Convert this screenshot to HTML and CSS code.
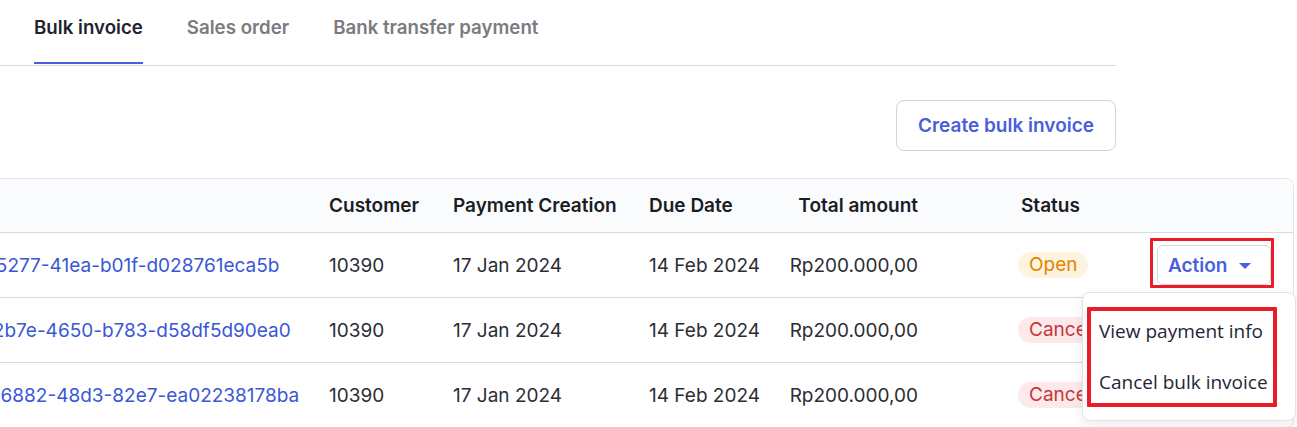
FILE: index.html
```html
<!DOCTYPE html>
<html>
<head>
<meta charset="utf-8">
<link rel="stylesheet" href="styles.css">
</head>
<body>
<div class="page">
  <nav class="tabs">
    <a class="tab active">Bulk invoice</a>
    <a class="tab">Sales order</a>
    <a class="tab">Bank transfer payment</a>
  </nav>
  <div class="toolbar">
    <button class="btn-create">Create bulk invoice</button>
  </div>
  <div class="table-card">
    <table class="grid">
      <colgroup>
        <col class="c-id"><col class="c-cust"><col class="c-pay"><col class="c-due"><col class="c-total"><col class="c-status"><col class="c-action">
      </colgroup>
      <thead>
        <tr>
          <th>ID</th>
          <th>Customer</th>
          <th>Payment Creation</th>
          <th>Due Date</th>
          <th class="right">Total amount</th>
          <th class="status-h">Status</th>
          <th></th>
        </tr>
      </thead>
      <tbody>
        <tr>
          <td><a class="link">9c1e4a3d-5277-41ea-b01f-d028761eca5b</a></td>
          <td>10390</td>
          <td>17 Jan 2024</td>
          <td>14 Feb 2024</td>
          <td class="right">Rp200.000,00</td>
          <td class="status"><span class="badge open">Open</span></td>
          <td class="action-cell"><button class="btn-action">Action <span class="caret"></span></button></td>
        </tr>
        <tr>
          <td><a class="link">4f0a6b21-2b7e-4650-b783-d58df5d90ea0</a></td>
          <td>10390</td>
          <td>17 Jan 2024</td>
          <td>14 Feb 2024</td>
          <td class="right">Rp200.000,00</td>
          <td class="status"><span class="badge cancel">Cancelled</span></td>
          <td class="action-cell"><button class="btn-action">Action <span class="caret"></span></button></td>
        </tr>
        <tr>
          <td><a class="link">e73b0d95-6882-48d3-82e7-ea02238178ba</a></td>
          <td>10390</td>
          <td>17 Jan 2024</td>
          <td>14 Feb 2024</td>
          <td class="right">Rp200.000,00</td>
          <td class="status"><span class="badge cancel">Cancelled</span></td>
          <td class="action-cell"><button class="btn-action">Action <span class="caret"></span></button></td>
        </tr>
      </tbody>
    </table>
  </div>
</div>

<div class="menu">
  <div class="menu-item">View payment info</div>
  <div class="menu-item">Cancel bulk invoice</div>
</div>

<div class="mark mark-action"></div>
<div class="mark mark-menu"></div>
</body>
</html>
```

FILE: styles.css
```css
html, body {
  margin: 0;
  padding: 0;
  background: #ffffff;
  overflow: hidden;
}
body {
  width: 1297px;
  height: 427px;
  position: relative;
  font-family: Inter, "Liberation Sans", sans-serif;
  color: #1d2029;
}
.page {
  width: 1116px;
}
.tabs {
  display: flex;
  gap: 44px;
  padding-left: 34px;
  height: 65px;
  border-bottom: 1px solid #d9dbe1;
  box-sizing: content-box;
}
.tab {
  font-size: 18.7px;
  font-weight: 600;
  line-height: 22px;
  padding-top: 17px;
  height: 45px;
  color: #7b7b7f;
}
.tab.active {
  color: #1f2330;
  border-bottom: 2px solid #4a5fd9;
}
.toolbar {
  display: flex;
  justify-content: flex-end;
  padding-top: 34px;
  padding-bottom: 27px;
}
.btn-create {
  width: 220px;
  height: 51px;
  border: 1px solid #cfd3dd;
  border-radius: 8px;
  background: #fff;
  color: #4a5fd9;
  font-family: Inter, "Liberation Sans", sans-serif;
  font-size: 19px;
  font-weight: 600;
  cursor: pointer;
}
.table-card {
  margin-left: -117px;
  width: 1411px;
  box-sizing: border-box;
  border: 1px solid #e1e4ea;
  border-radius: 8px;
  overflow: hidden;
}
.grid {
  width: 100%;
  table-layout: fixed;
  border-collapse: collapse;
  font-size: 19px;
}
.c-id { width: 429px; }
.c-cust { width: 124px; }
.c-pay { width: 196px; }
.c-due { width: 144px; }
.c-total { width: 183px; }
.c-status { width: 184px; }
.c-action { width: 149px; }
.grid th {
  height: 53px;
  background: #fafbfd;
  font-weight: 600;
  text-align: left;
  padding: 0 0 0 16px;
  color: #1a1d24;
  border-bottom: 1px solid #d6dae2;
  white-space: nowrap;
}
.grid td {
  height: 64px;
  padding: 0 0 0 16px;
  border-bottom: 1px solid #d6dae2;
  color: #2a2d34;
  white-space: nowrap;
  overflow: hidden;
}
.grid tbody tr:last-child td { border-bottom: none; }
.grid .right { text-align: right; padding-right: 42px; padding-left: 0; }
.grid .status { padding-left: 58px; }
.grid .status-h { padding-left: 61px; }
.link {
  color: #3a57d4;
  text-decoration: none;
}
.badge {
  display: inline-block;
  padding: 0 11px;
  height: 26px;
  line-height: 26px;
  border-radius: 13px;
  font-size: 19px;
}
.badge.open {
  background: #fdf3de;
  color: #e08600;
}
.badge.cancel {
  background: #fde8ea;
  color: #c23a3a;
}
.grid .action-cell { padding-left: 13px; }
.btn-action {
  display: inline-flex;
  align-items: center;
  gap: 12px;
  height: 40px;
  width: 114px;
  padding: 0 0 0 10px;
  border: 1px solid #d3d7df;
  border-radius: 6px;
  background: #fff;
  color: #4a5fd9;
  font-family: Inter, "Liberation Sans", sans-serif;
  font-size: 19px;
  font-weight: 600;
}
.caret {
  width: 0;
  height: 0;
  border-left: 6px solid transparent;
  border-right: 6px solid transparent;
  border-top: 6px solid #4a5fd9;
  margin-top: 2px;
}
.menu {
  position: absolute;
  left: 1082px;
  top: 292px;
  width: 214px;
  height: 129px;
  box-sizing: border-box;
  background: #fff;
  border: 1px solid #dfe2e8;
  border-radius: 8px;
  box-shadow: 0 4px 12px rgba(20, 30, 60, 0.08);
  padding-top: 25px;
  font-family: "Open Sans", "Noto Sans", sans-serif;
}
.menu-item {
  font-size: 19px;
  line-height: 26px;
  height: 51px;
  padding-left: 16px;
  color: #1e2638;
  white-space: nowrap;
}
.mark {
  position: absolute;
  border: 3px solid #ea1c28;
  box-sizing: border-box;
  border-radius: 1px;
}
.mark-action {
  left: 1150px;
  top: 238px;
  width: 124px;
  height: 50px;
}
.mark-menu {
  left: 1087px;
  top: 307px;
  width: 190px;
  height: 100px;
  border-width: 4px;
}
```
